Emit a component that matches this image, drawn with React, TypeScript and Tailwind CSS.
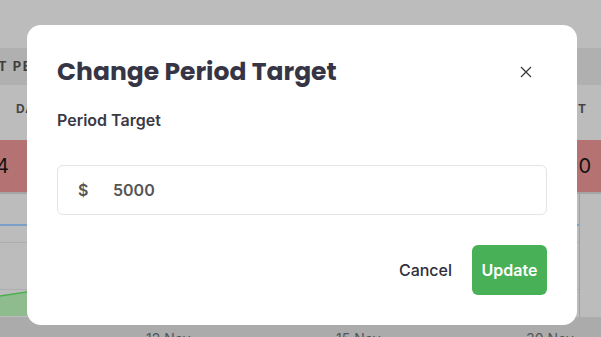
import React from "react";

export default function App() {
  return (
    <div className="relative w-[601px] h-[337px] overflow-hidden bg-[#bcbcbc]" style={{ fontFamily: "Inter, 'Liberation Sans', sans-serif" }}>
      {/* background page (dimmed) */}
      <div className="flex flex-col w-full h-full">
        <div className="h-[48px]" />
        <div className="h-[37px] bg-[#b0b0b0] flex items-center text-[13px] font-bold tracking-[1.5px] text-[#3e3e3e]">
          <span className="-ml-[2px]">T PE</span>
        </div>
        <div className="h-[55px] flex items-start pt-[15px] justify-between text-[12px] font-bold text-[#444] tracking-[1px]">
          <span className="ml-[16px]">DA</span>
          <span className="mr-[14px]">ET</span>
        </div>
        <div className="h-[52px] bg-[#b57272] flex items-center justify-between text-[20px] text-[#111]">
          <div className="flex gap-[18px]"><span className="-ml-[4px]">4</span><span>-</span></div>
          <span className="mr-[10px]">0</span>
        </div>
        <div className="h-[2px] bg-[#a5a5a5]" />
        <div className="relative flex-1">
          <div className="absolute left-0 right-[22px] top-[30px] h-[2px] bg-[#7a9fc8]" />
          <div className="absolute left-0 right-[22px] top-[48px] h-px bg-[#adadad]" />
          <div className="absolute left-0 right-[22px] top-[95px] h-px bg-[#adadad]" />
          <div className="absolute left-[579px] top-0 bottom-0 w-px bg-[#a0a0a0]" />
          <svg className="absolute left-0 top-[90px]" width="560" height="32" viewBox="0 0 560 32">
            <path d="M0 12 L60 3 L560 3 L560 32 L0 32 Z" fill="#8fbc8f" />
            <path d="M0 12 L60 3" stroke="#4caf50" strokeWidth="1.5" fill="none" />
          </svg>
          <div className="absolute left-0 right-0 bottom-0 h-[20px] bg-[#ababab] text-[14px] text-[#555]">
            <span className="absolute left-[146px] top-[11px]">12 Nov</span>
            <span className="absolute left-[336px] top-[11px]">15 Nov</span>
            <span className="absolute left-[526px] top-[11px]">30 Nov</span>
          </div>
        </div>
      </div>

      {/* modal */}
      <div className="absolute left-[27px] top-[25px] w-[550px] h-[300px] bg-white rounded-[14px] flex flex-col px-[30px] pt-[29px]">
        <div className="flex items-start justify-between">
          <h2 className="text-[25px] leading-[36px] font-bold text-[#363545]" style={{ fontFamily: "Poppins, Inter, 'Liberation Sans', sans-serif" }}>
            Change Period Target
          </h2>
          <button className="mt-[11px] mr-[14px] w-[14px] h-[14px] flex items-center justify-center text-[#444]">
            <svg width="12" height="12" viewBox="0 0 12 12">
              <path d="M1 1 L11 11 M11 1 L1 11" stroke="#3a3a45" strokeWidth="1.3" />
            </svg>
          </button>
        </div>
        <div className="mt-[20px] text-[16px] font-semibold text-[#3a3946] leading-[20px]">Period Target</div>
        <div className="mt-[35px] h-[50px] border border-[#e4e4e4] rounded-[6px] flex items-center pl-[20px] text-[16px] font-semibold text-[#555]">
          <span className="w-[35px]">$</span>
          <span>5000</span>
        </div>
        <div className="mt-[30px] flex items-center justify-end gap-[20px]">
          <button className="text-[16px] font-medium text-[#2e2e3a]">Cancel</button>
          <button className="w-[75px] h-[50px] rounded-[6px] bg-[#48b056] text-white text-[16px] font-semibold">Update</button>
        </div>
      </div>
    </div>
  );
}
